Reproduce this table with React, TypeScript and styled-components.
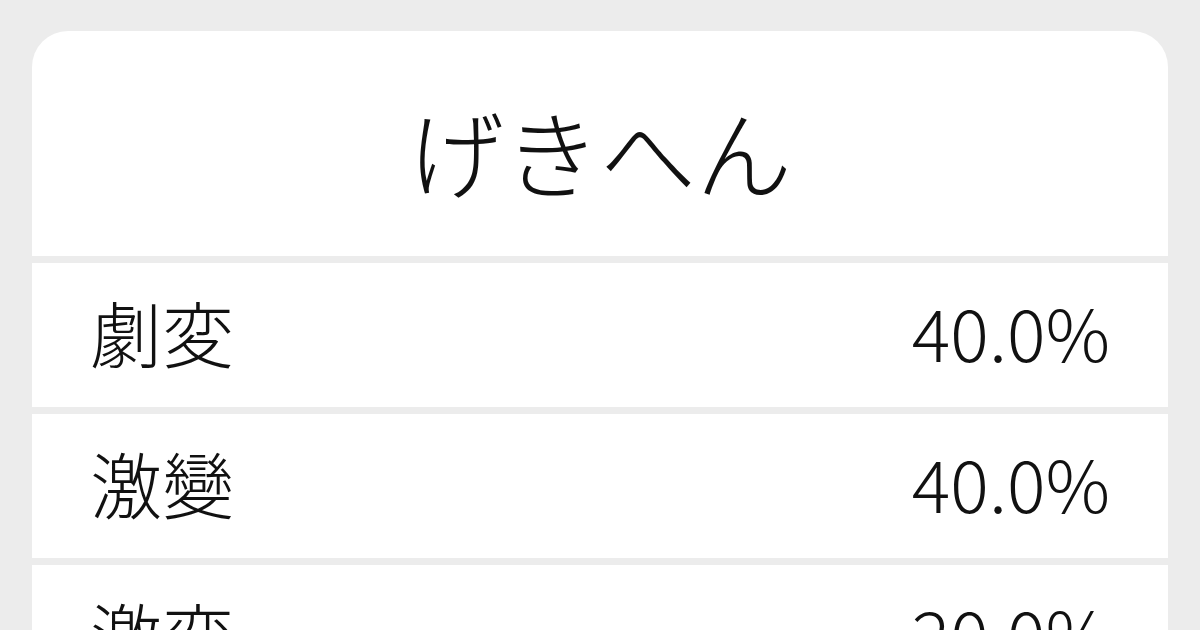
import React from "react";
import styled, { createGlobalStyle } from "styled-components";

const Global = createGlobalStyle`
  html, body { margin: 0; padding: 0; background: #ececec; }
  body { font-family: "Noto Sans CJK JP", "Noto Sans", sans-serif; color: #111; }
`;

const Page = styled.div`
  width: 1200px;
  height: 630px;
  overflow: hidden;
  box-sizing: border-box;
  padding: 31px 32px 0;
`;

const Card = styled.div`
  display: flex;
  flex-direction: column;
  gap: 7px;
  border-radius: 36px 36px 0 0;
  overflow: hidden;
`;

const Header = styled.div`
  height: 225px;
  background: #fff;
  display: flex;
  align-items: center;
  justify-content: center;
  padding-top: 12px;
  box-sizing: border-box;
`;

const Title = styled.h1`
  margin: 0;
  font-size: 96px;
  font-weight: 300;
  line-height: 1;
  letter-spacing: 0;
`;

const Row = styled.div`
  height: 144px;
  background: #fff;
  display: flex;
  align-items: center;
  justify-content: space-between;
  padding: 0 58px 8px 58px;
  box-sizing: border-box;
  font-size: 72px;
  font-weight: 300;
  line-height: 1;
`;

const Word = styled.span``;
const Pct = styled.span``;

const rows = [
  { word: "劇変", pct: "40.0%" },
  { word: "激變", pct: "40.0%" },
  { word: "激変", pct: "20.0%" },
];

export default function App() {
  return (
    <>
      <Global />
      <Page>
        <Card>
          <Header>
            <Title>げきへん</Title>
          </Header>
          {rows.map((r) => (
            <Row key={r.word}>
              <Word>{r.word}</Word>
              <Pct>{r.pct}</Pct>
            </Row>
          ))}
        </Card>
      </Page>
    </>
  );
}
